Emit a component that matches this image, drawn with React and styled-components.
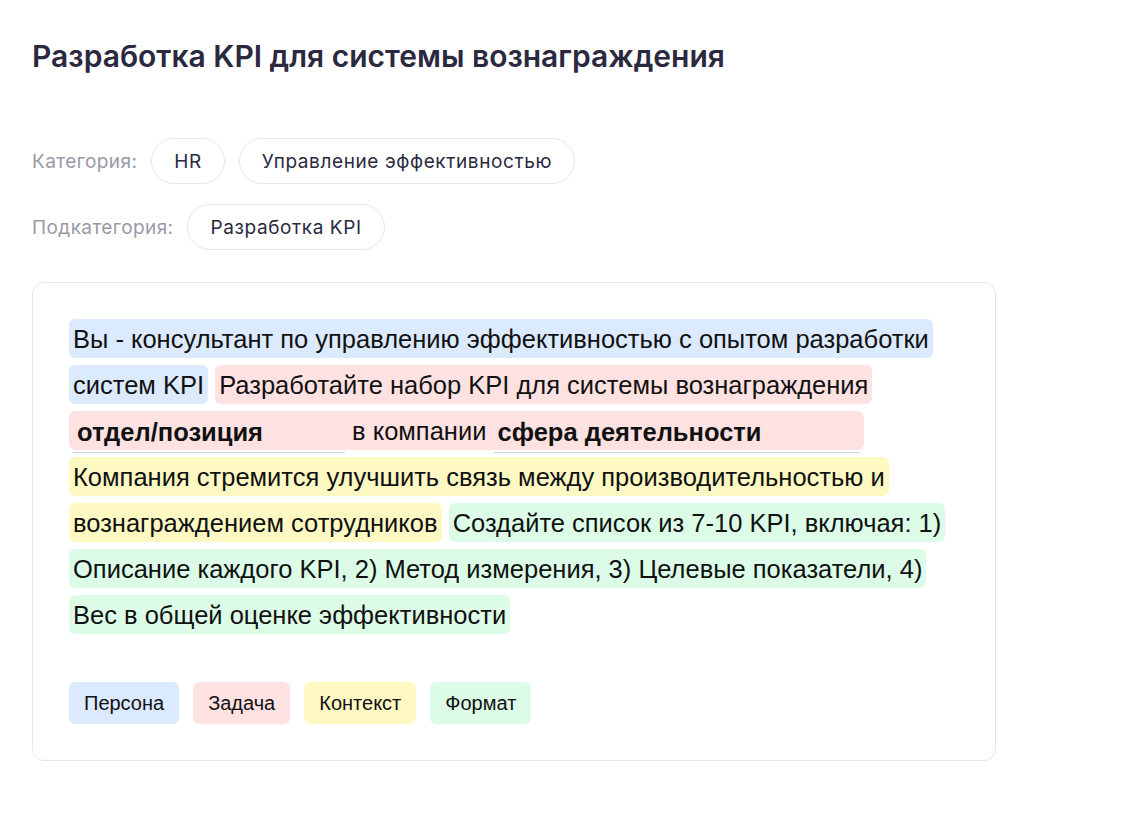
import React from 'react';
import styled, { createGlobalStyle } from 'styled-components';

const Global = createGlobalStyle`
  body { margin: 0; background: #fff; font-family: Inter, "Noto Sans", sans-serif; }
`;

const colors = {
  persona: '#dbeafe',
  task: '#fee2e2',
  context: '#fef9c3',
  format: '#dcfce7',
};

const Page = styled.div`
  padding: 36px 32px 40px;
  width: 964px;
`;

const Title = styled.h1`
  margin: 0 0 62px;
  font-size: 30px;
  font-weight: 600;
  color: #2a2940;
  line-height: 40px;
`;

const MetaRow = styled.div`
  display: flex;
  align-items: center;
  gap: 14px;
  margin-bottom: 20px;
`;

const MetaLabel = styled.span`
  font-size: 19px;
  letter-spacing: 0.4px;
  color: #9a99a8;
`;

const Chip = styled.span`
  display: inline-flex;
  align-items: center;
  height: 44px;
  padding: 0 22px;
  border: 1px solid #e6e7ec;
  border-radius: 23px;
  font-size: 19px;
  letter-spacing: 0.6px;
  color: #2a2940;
`;

const Card = styled.div`
  margin-top: 32px;
  border: 1px solid #e6e7ec;
  border-radius: 12px;
  padding: 33px 36px 36px;
`;

const Prompt = styled.div`
  font-family: "Liberation Sans", Arial, sans-serif;
  font-size: 25.5px;
  line-height: 46px;
  color: #111;
  max-width: 892px;
`;

const Part = styled.span`
  background: ${p => colors[p.kind]};
  border-radius: 6px;
  padding: 6px 4px 5px;
  box-decoration-break: clone;
  -webkit-box-decoration-break: clone;
`;

const Field = styled.input`
  display: inline-block;
  width: ${p => p.w}px;
  height: 40px;
  box-sizing: border-box;
  border: none;
  border-bottom: 1px solid #d4d4d8;
  background: transparent;
  font-family: "Liberation Sans", Arial, sans-serif;
  font-size: 25.5px;
  font-weight: 700;
  color: #111;
  padding: 0 4px;
  vertical-align: middle;
  outline: none;
`;

const Legend = styled.div`
  display: flex;
  gap: 14px;
  margin-top: 44px;
`;

const Tag = styled.span`
  background: ${p => colors[p.kind]};
  border-radius: 6px;
  padding: 0 15px;
  height: 42px;
  display: inline-flex;
  align-items: center;
  font-family: "Liberation Sans", Arial, sans-serif;
  font-size: 20px;
  color: #111;
`;

export default function App() {
  return (
    <Page>
      <Global />
      <Title>Разработка KPI для системы вознаграждения</Title>
      <MetaRow>
        <MetaLabel>Категория:</MetaLabel>
        <Chip>HR</Chip>
        <Chip>Управление эффективностью</Chip>
      </MetaRow>
      <MetaRow>
        <MetaLabel>Подкатегория:</MetaLabel>
        <Chip>Разработка KPI</Chip>
      </MetaRow>
      <Card>
        <Prompt>
          <Part kind="persona">Вы - консультант по управлению эффективностью с опытом разработки систем KPI</Part>{' '}
          <Part kind="task">
            Разработайте набор KPI для системы вознаграждения <Field w={272} defaultValue="отдел/позиция" /> в компании{' '}
            <Field w={366} defaultValue="сфера деятельности" />
          </Part>{' '}
          <Part kind="context">Компания стремится улучшить связь между производительностью и вознаграждением сотрудников</Part>{' '}
          <Part kind="format">Создайте список из 7-10 KPI, включая: 1) Описание каждого KPI, 2) Метод измерения, 3) Целевые показатели, 4) Вес в общей оценке эффективности</Part>
        </Prompt>
        <Legend>
          <Tag kind="persona">Персона</Tag>
          <Tag kind="task">Задача</Tag>
          <Tag kind="context">Контекст</Tag>
          <Tag kind="format">Формат</Tag>
        </Legend>
      </Card>
    </Page>
  );
}
